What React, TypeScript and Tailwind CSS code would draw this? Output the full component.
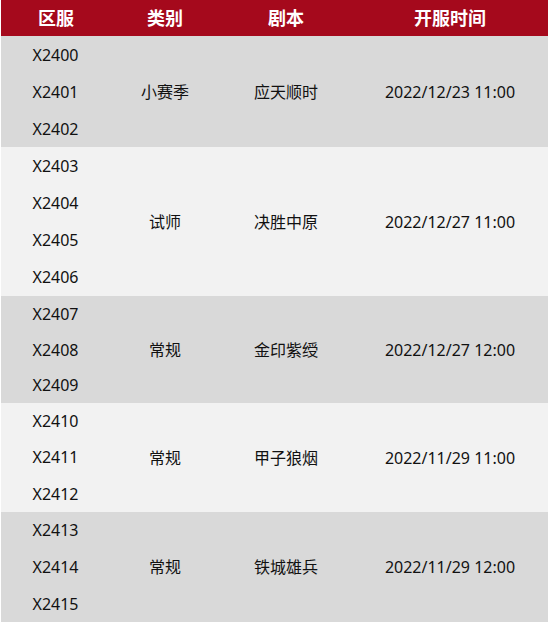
import React from "react";

type Group = {
  servers: string[];
  type: string;
  script: string;
  time: string;
  height: string;
  bg: string;
};

const groups: Group[] = [
  { servers: ["X2400", "X2401", "X2402"], type: "小赛季", script: "应天顺时", time: "2022/12/23 11:00", height: "h-[111px]", bg: "bg-[#d9d9d9]" },
  { servers: ["X2403", "X2404", "X2405", "X2406"], type: "试师", script: "决胜中原", time: "2022/12/27 11:00", height: "h-[149px]", bg: "bg-[#f2f2f2]" },
  { servers: ["X2407", "X2408", "X2409"], type: "常规", script: "金印紫绶", time: "2022/12/27 12:00", height: "h-[107px]", bg: "bg-[#d9d9d9]" },
  { servers: ["X2410", "X2411", "X2412"], type: "常规", script: "甲子狼烟", time: "2022/11/29 11:00", height: "h-[109px]", bg: "bg-[#f2f2f2]" },
  { servers: ["X2413", "X2414", "X2415"], type: "常规", script: "铁城雄兵", time: "2022/11/29 12:00", height: "h-[110px]", bg: "bg-[#d9d9d9]" },
];

const cols = "grid grid-cols-[109px_110px_132px_1fr]";

export default function App() {
  return (
    <div className="w-[549px] h-[623px] bg-white px-px pb-px font-['Noto_Sans','Noto_Sans_CJK_SC',sans-serif] text-[16px] text-[#111]">
      <div className={`${cols} h-[36px] bg-[#a5091c] text-white font-bold text-[18px] items-center`}>
        <div className="text-center pl-[1px]">区服</div>
        <div className="text-center">类别</div>
        <div className="text-center">剧本</div>
        <div className="text-center">开服时间</div>
      </div>

      {groups.map((g) => (
        <div key={g.servers[0]} className={`${cols} ${g.height} ${g.bg} items-center`}>
          <div className="flex flex-col h-full">
            {g.servers.map((s) => (
              <div key={s} className="flex-1 flex items-center justify-center">
                {s}
              </div>
            ))}
          </div>
          <div className="text-center">{g.type}</div>
          <div className="text-center">{g.script}</div>
          <div className="text-center">{g.time}</div>
        </div>
      ))}
    </div>
  );
}
